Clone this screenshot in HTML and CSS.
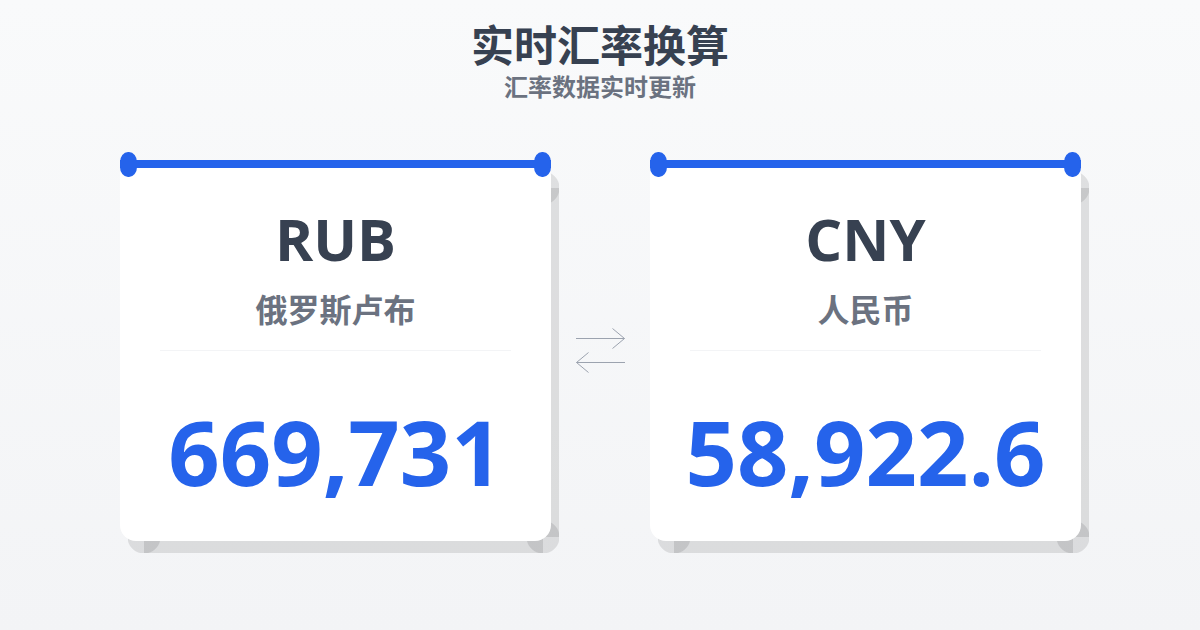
FILE: index.html
```
<!DOCTYPE html>
<html lang="zh-CN">
<head>
  <meta charset="UTF-8" />
  <meta name="viewport" content="width=device-width, initial-scale=1.0"/>
  <title>实时汇率换算</title>
  <link rel="stylesheet" href="styles.css">
</head>
<body>
  <header class="page-header">
    <h1>实时汇率换算</h1>
    <p>汇率数据实时更新</p>
  </header>

  <main class="converter">
    <section class="card">
      <div class="shadow"></div>
      <div class="card-body">
        <h2 class="code">RUB</h2>
        <p class="name">俄罗斯卢布</p>
        <p class="amount">669,731</p>
      </div>
      <div class="bar"></div>
    </section>

    <div class="swap">
      <svg width="49" height="45" viewBox="0 0 49 45" fill="none" stroke="#9ca3af" stroke-width="1" aria-hidden="true">
        <path d="M0 10.5H48.500M36.500 0.500L48.500 10.500L36.500 20.500"/>
        <path d="M49 34.500H0.500M12.500 24.500L0.500 34.500L12.500 44.500"/>
      </svg>
    </div>

    <section class="card">
      <div class="shadow"></div>
      <div class="card-body">
        <h2 class="code">CNY</h2>
        <p class="name">人民币</p>
        <p class="amount">58,922.6</p>
      </div>
      <div class="bar"></div>
    </section>
  </main>
</body>
</html>
```
FILE: styles.css
```
* {
  box-sizing: border-box;
}

body {
  margin: 0;
  min-height: 100vh;
  font-family: "Open Sans", "Noto Sans CJK SC", sans-serif;
  font-weight: 700;
  color: #374151;
  background: linear-gradient(#f9fafb, #f3f4f6);
}

h1,
h2,
p {
  margin: 0;
}

.page-header {
  padding-top: 16px;
  text-align: center;
}

.page-header h1 {
  font-size: 43px;
  line-height: 60px;
}

.page-header p {
  font-size: 24px;
  line-height: 22px;
  color: #6b7280;
}

.converter {
  display: flex;
  align-items: center;
  padding: 62px 119px 77px 120px;
}

.card {
  position: relative;
  flex: 1;
  min-width: 0;
}

.card-body {
  position: relative;
  padding: 39px 40px 30px;
  border-radius: 16px;
  background: #fff;
  text-align: center;
}

/* blue strip with a round cap at each end */
.bar {
  position: absolute;
  top: 0;
  left: 0;
  right: 0;
  height: 8px;
  background: #2563eb;
}

.bar::before,
.bar::after {
  content: "";
  position: absolute;
  top: -8px;
  width: 17px;
  height: 25px;
  border-radius: 8px / 10px;
  background: #2563eb;
}

.bar::before {
  left: 0;
}

.bar::after {
  right: 0;
}

/* corner discs, with the two bands laid over them */
.shadow {
  --disc: radial-gradient(circle, rgba(0, 0, 0, 0.1) 16px, transparent 17px);
  position: absolute;
  top: 12px;
  left: 8px;
  right: -8px;
  bottom: -12px;
  background:
    var(--disc) left top / 32px 32px no-repeat,
    var(--disc) right top / 32px 32px no-repeat,
    var(--disc) left bottom / 32px 32px no-repeat,
    var(--disc) right bottom / 32px 32px no-repeat;
}

.shadow::before,
.shadow::after {
  content: "";
  position: absolute;
  background: rgba(0, 0, 0, 0.1);
}

.shadow::before {
  inset: 16px 0;
}

.shadow::after {
  inset: 0 16px;
}

.code {
  font-size: 58px;
  line-height: 80px;
}

.name {
  padding: 11px 0 20px;
  border-bottom: 1px solid #f3f4f6;
  font-size: 32px;
  line-height: 40px;
  color: #6b7280;
}

.amount {
  margin: 40px -20px 0;
  font-size: 90px;
  line-height: 120px;
  color: #2563eb;
  white-space: nowrap;
}

.swap {
  display: flex;
  flex: none;
  justify-content: center;
  width: 99px;
}
```
